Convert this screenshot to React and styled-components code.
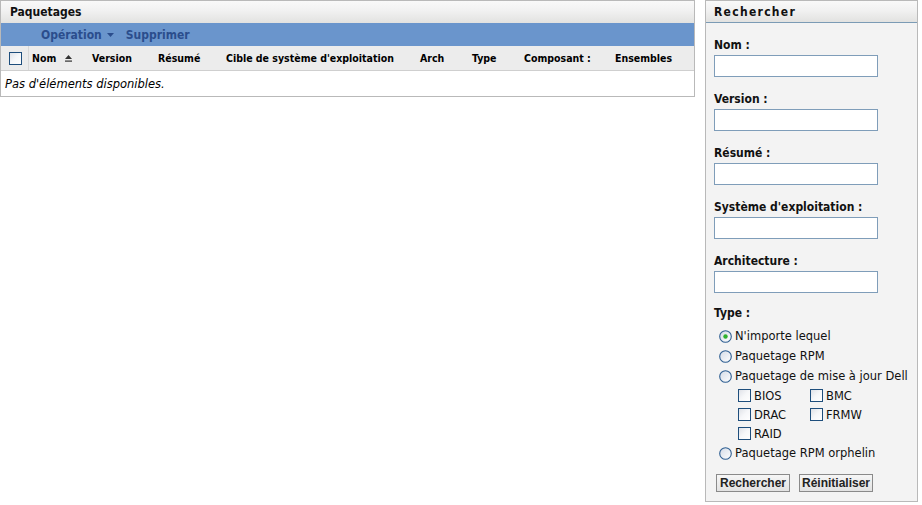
import React from "react";
import styled, { createGlobalStyle } from "styled-components";

const Global = createGlobalStyle`
  html, body { margin: 0; padding: 0; background: #ffffff; }
  body { font-family: "DejaVu Sans Condensed", "DejaVu Sans", sans-serif; color: #000; }
`;

const Page = styled.div`
  display: flex;
  align-items: flex-start;
  gap: 10px;
  width: 922px;
`;

const ListPanel = styled.section`
  width: 695px;
  box-sizing: border-box;
  border: 1px solid #b9b9b9;
  background: #fff;
`;

const TitleBar = styled.div`
  height: ${(p) => p.$h}px;
  box-sizing: border-box;
  display: flex;
  align-items: center;
  padding-left: ${(p) => p.$pad}px;
  background: linear-gradient(#f9f9f9, #f1f1f1 45%, #e2e2e0);
  border-bottom: ${(p) => (p.$line ? `1px solid ${p.$line}` : "none")};
  font-weight: bold;
  font-size: 12px;
  letter-spacing: ${(p) => p.$ls || 0}px;
  color: #111;
`;

const Toolbar = styled.div`
  height: 23px;
  display: flex;
  align-items: center;
  gap: 12px;
  padding-left: 40px;
  background: #6a95cc;
`;

const ToolLink = styled.span`
  display: inline-flex;
  align-items: center;
  gap: 5px;
  font-size: 12px;
  font-weight: bold;
  color: #2b4d8c;
`;

const HeaderRow = styled.div`
  display: flex;
  height: 24px;
  align-items: center;
  background: #ececec;
  border-bottom: 1px solid #cfcfcf;
`;

const CheckCell = styled.div`
  width: 28px;
  height: 100%;
  box-sizing: border-box;
  display: flex;
  align-items: center;
  padding-left: 8px;
  border-right: 1px solid #d8d8d8;
`;

const HeadCell = styled.div`
  width: ${(p) => p.$w}px;
  box-sizing: border-box;
  padding-left: 3px;
  display: flex;
  align-items: center;
  gap: 8px;
  font-size: 10.5px;
  font-weight: bold;
  white-space: nowrap;
`;

const EmptyRow = styled.div`
  height: 25px;
  display: flex;
  align-items: center;
  padding-left: 4px;
  font-size: 11.5px;
  font-style: italic;
  font-family: "DejaVu Sans", sans-serif;
`;

const SearchPanel = styled.aside`
  width: 213px;
  height: 502px;
  box-sizing: border-box;
  border: 1px solid #b9b9b9;
  background: #f3f3f3;
  display: flex;
  flex-direction: column;
`;

const Form = styled.div`
  padding: 14px 0 0 8px;
  display: flex;
  flex-direction: column;
`;

const Label = styled.label`
  display: block;
  line-height: 16px;
  font-size: 12px;
  font-weight: bold;
  margin-top: ${(p) => p.$mt ?? 13}px;
  color: #111;
`;

const TextInput = styled.input`
  width: 164px;
  height: 22px;
  box-sizing: border-box;
  margin-top: 2px;
  border: 1px solid #7f9db9;
  background: #fff;
  padding: 0 3px;
`;

const Options = styled.div`
  margin-top: 5px;
  display: flex;
  flex-direction: column;
`;

const OptRow = styled.div`
  height: ${(p) => p.$h || 20}px;
  display: flex;
  align-items: center;
  gap: 3px;
  padding-left: ${(p) => p.$indent}px;
  font-family: "DejaVu Sans", sans-serif;
  font-size: 11.5px;
  color: #111;
  white-space: nowrap;
`;

const CheckItem = styled.span`
  width: 69px;
  display: inline-flex;
  align-items: center;
  gap: 3px;
`;

const Buttons = styled.div`
  display: flex;
  gap: 9px;
  margin-top: 11px;
  padding-left: 2px;
`;

const Button = styled.button`
  height: 18px;
  width: ${(p) => p.$w}px;
  padding: 0;
  box-sizing: border-box;
  border: 1px solid #8a8a8a;
  background: linear-gradient(#f6f6f6, #e2e2e2);
  font-family: "Liberation Sans", Arial, sans-serif;
  font-weight: bold;
  font-size: 12px;
  color: #222;
`;

const Box = ({ id }) => (
  <svg width="13" height="13" viewBox="0 0 13 13">
    <defs>
      <linearGradient id={id} x1="0" y1="0" x2="1" y2="1">
        <stop offset="0" stopColor="#dde0e6" />
        <stop offset="0.5" stopColor="#f6f7f9" />
        <stop offset="1" stopColor="#ffffff" />
      </linearGradient>
    </defs>
    <rect x="0.5" y="0.5" width="12" height="12" fill={`url(#${id})`} stroke="#1e4e7c" />
  </svg>
);

const Radio = ({ id, checked }) => (
  <svg width="13" height="13" viewBox="0 0 13 13">
    <defs>
      <linearGradient id={id} x1="0" y1="0" x2="1" y2="1">
        <stop offset="0" stopColor="#d4dbe6" />
        <stop offset="1" stopColor="#ffffff" />
      </linearGradient>
    </defs>
    <circle cx="6.5" cy="6.5" r="5.8" fill={`url(#${id})`} stroke="#2f5f92" strokeWidth="1.1" />
    {checked && <circle cx="6.5" cy="6.5" r="2.2" fill="#2fb12f" />}
  </svg>
);

const SortIcon = () => (
  <svg width="9" height="9" viewBox="0 0 9 9">
    <path d="M4.5 1 L8 5 L1 5 Z" fill="#333" />
    <rect x="1" y="6.5" width="7" height="1.2" fill="#333" />
  </svg>
);

const Caret = () => (
  <svg width="7" height="4" viewBox="0 0 7 4">
    <path d="M0 0 L7 0 L3.5 4 Z" fill="#2b4d8c" />
  </svg>
);

const columns = [
  { label: "Version", w: 66 },
  { label: "Résumé", w: 68 },
  { label: "Cible de système d'exploitation", w: 194 },
  { label: "Arch", w: 52 },
  { label: "Type", w: 52 },
  { label: "Composant :", w: 91 },
  { label: "Ensembles", w: 70 },
];

const fields = ["Nom :", "Version :", "Résumé :", "Système d'exploitation :", "Architecture :"];

export default function App() {
  return (
    <>
      <Global />
      <Page>
        <ListPanel>
          <TitleBar $h={22} $pad={9}>Paquetages</TitleBar>
          <Toolbar>
            <ToolLink>
              Opération <Caret />
            </ToolLink>
            <ToolLink>Supprimer</ToolLink>
          </Toolbar>
          <HeaderRow>
            <CheckCell>
              <Box id="hdr" />
            </CheckCell>
            <HeadCell $w={60}>
              Nom <SortIcon />
            </HeadCell>
            {columns.map((c) => (
              <HeadCell key={c.label} $w={c.w}>
                {c.label}
              </HeadCell>
            ))}
          </HeaderRow>
          <EmptyRow>Pas d'éléments disponibles.</EmptyRow>
        </ListPanel>

        <SearchPanel>
          <TitleBar $h={22} $pad={8} $ls={1.3} $line="#7b9bb5">
            Rechercher
          </TitleBar>
          <Form>
            {fields.map((f, i) => (
              <React.Fragment key={f}>
                <Label $mt={i === 0 ? 0 : 14}>{f}</Label>
                <TextInput type="text" />
              </React.Fragment>
            ))}
            <Label $mt={12}>Type :</Label>
            <Options>
              <OptRow $indent={5}>
                <Radio id="r1" checked /> N'importe lequel
              </OptRow>
              <OptRow $indent={5}>
                <Radio id="r2" /> Paquetage RPM
              </OptRow>
              <OptRow $indent={5}>
                <Radio id="r3" /> Paquetage de mise à jour Dell
              </OptRow>
              <OptRow $indent={24} $h={19}>
                <CheckItem>
                  <Box id="c1" /> BIOS
                </CheckItem>
                <CheckItem>
                  <Box id="c2" /> BMC
                </CheckItem>
              </OptRow>
              <OptRow $indent={24} $h={19}>
                <CheckItem>
                  <Box id="c3" /> DRAC
                </CheckItem>
                <CheckItem>
                  <Box id="c4" /> FRMW
                </CheckItem>
              </OptRow>
              <OptRow $indent={24} $h={19}>
                <CheckItem>
                  <Box id="c5" /> RAID
                </CheckItem>
              </OptRow>
              <OptRow $indent={5}>
                <Radio id="r4" /> Paquetage RPM orphelin
              </OptRow>
            </Options>
            <Buttons>
              <Button $w={74}>Rechercher</Button>
              <Button $w={74}>Réinitialiser</Button>
            </Buttons>
          </Form>
        </SearchPanel>
      </Page>
    </>
  );
}
